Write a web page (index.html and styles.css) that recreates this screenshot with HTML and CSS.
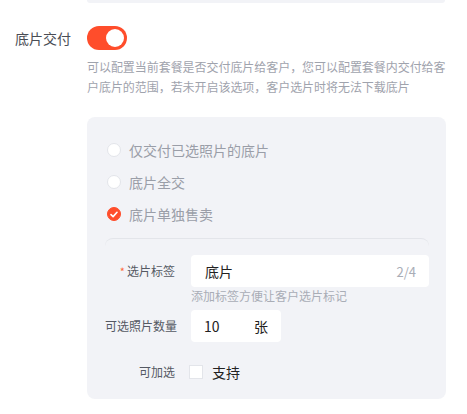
FILE: index.html
```html
<!DOCTYPE html>
<html lang="zh-CN">
<head>
<meta charset="utf-8">
<title>底片交付</title>
<link rel="stylesheet" href="styles.css">
</head>
<body>
<div class="prev-panel"></div>
<div class="row">
  <div class="row-label">底片交付</div>
  <div class="row-content">
    <div class="toggle"><span class="knob"></span></div>
    <p class="desc">可以配置当前套餐是否交付底片给客户，您可以配置套餐内交付给客户底片的范围，若未开启该选项，客户选片时将无法下载底片</p>
    <div class="panel">
      <div class="radio"><span class="radio-dot"></span><span class="radio-text">仅交付已选照片的底片</span></div>
      <div class="radio"><span class="radio-dot"></span><span class="radio-text">底片全交</span></div>
      <div class="radio"><span class="radio-dot checked"><svg width="8" height="7" viewBox="0 0 8 7"><path d="M1 3.6 L3.1 5.6 L7 1.3" fill="none" stroke="#fff" stroke-width="1.6" stroke-linecap="round" stroke-linejoin="round"/></svg></span><span class="radio-text">底片单独售卖</span></div>
      <div class="sub">
        <div class="field">
          <div class="field-label"><span class="star">*</span>选片标签</div>
          <div class="field-body">
            <div class="input wide"><span class="val">底片</span><span class="count">2/4</span></div>
            <div class="hint">添加标签方便让客户选片标记</div>
          </div>
        </div>
        <div class="field">
          <div class="field-label">可选照片数量</div>
          <div class="field-body">
            <div class="input narrow"><span class="val">10</span><span class="unit">张</span></div>
          </div>
        </div>
        <div class="field check-row">
          <div class="field-label">可加选</div>
          <div class="field-body check">
            <span class="box"></span><span class="check-text">支持</span>
          </div>
        </div>
      </div>
    </div>
  </div>
</div>
</body>
</html>
```

FILE: styles.css
```css
* { box-sizing: border-box; }
body {
  margin: 0;
  background: #fff;
  font-family: "Noto Sans CJK SC", "Noto Sans", sans-serif;
  color: #333;
}
.prev-panel {
  margin-left: 87px;
  width: 358px;
  height: 3px;
  background: #f2f3f7;
  border-radius: 0 0 8px 8px;
}
.row {
  display: flex;
  margin-top: 23px;
}
.row-label {
  width: 87px;
  padding-left: 15px;
  font-size: 14px;
  line-height: 24px;
  color: #4a4d55;
}
.row-content {
  width: 359px;
}
.toggle {
  width: 40px;
  height: 24px;
  border-radius: 12px;
  background: #ff4d2b;
  position: relative;
}
.knob {
  position: absolute;
  right: 3px;
  top: 3px;
  width: 18px;
  height: 18px;
  border-radius: 50%;
  background: #fff;
}
.desc {
  margin: 7px 0 0;
  font-size: 12px;
  line-height: 20px;
  color: #9fa3ad;
  letter-spacing: -0.05px;
}
.panel {
  margin-top: 20px;
  background: #f2f3f7;
  border-radius: 8px;
  padding: 17px 17px 11px 18px;
}
.radio {
  display: flex;
  align-items: center;
  height: 32px;
  padding-left: 2px;
}
.radio-dot {
  width: 14px;
  height: 14px;
  border-radius: 50%;
  background: #fff;
  border: 1px solid #e3e5ea;
  margin-right: 8px;
  display: flex;
  align-items: center;
  justify-content: center;
}
.radio-dot.checked {
  background: #ff4d2b;
  border-color: #ff4d2b;
}
.radio-text {
  font-size: 14px;
  color: #9a9ea8;
}
.sub {
  margin-top: 8px;
  border-top: 1px solid #e3e5ea;
  border-radius: 8px 8px 0 0;
  padding-top: 16px;
}
.field {
  display: flex;
  margin-bottom: 0;
}
.field + .field {
  margin-top: 5px;
}
.field-label {
  width: 70px;
  text-align: right;
  font-size: 12px;
  line-height: 32px;
  color: #555963;
  margin-right: 16px;
  white-space: nowrap;
}
.star {
  color: #ff6a3d;
  font-size: 11px;
  margin-right: 2px;
}
.input {
  height: 32px;
  background: #fff;
  border-radius: 4px;
  display: flex;
  align-items: center;
  padding: 0 13px 0 14px;
  font-size: 14px;
  color: #222;
}
.input.wide {
  width: 238px;
  justify-content: space-between;
}
.input.narrow {
  width: 90px;
  padding-left: 13px;
}
.input.narrow .val { width: 50px; }
.count {
  color: #a9adb6;
  font-size: 13px;
}
.hint {
  font-size: 12px;
  line-height: 18px;
  color: #a9adb6;
}
.check-row {
  margin-top: 14px !important;
}
.check {
  display: flex;
  align-items: center;
  height: 32px;
}
.box {
  width: 14px;
  height: 14px;
  background: #fff;
  border: 1px solid #e3e5ea;
  margin-right: 9px;
  margin-left: -2px;
}
.check-text {
  font-size: 14px;
  color: #222;
}
```
